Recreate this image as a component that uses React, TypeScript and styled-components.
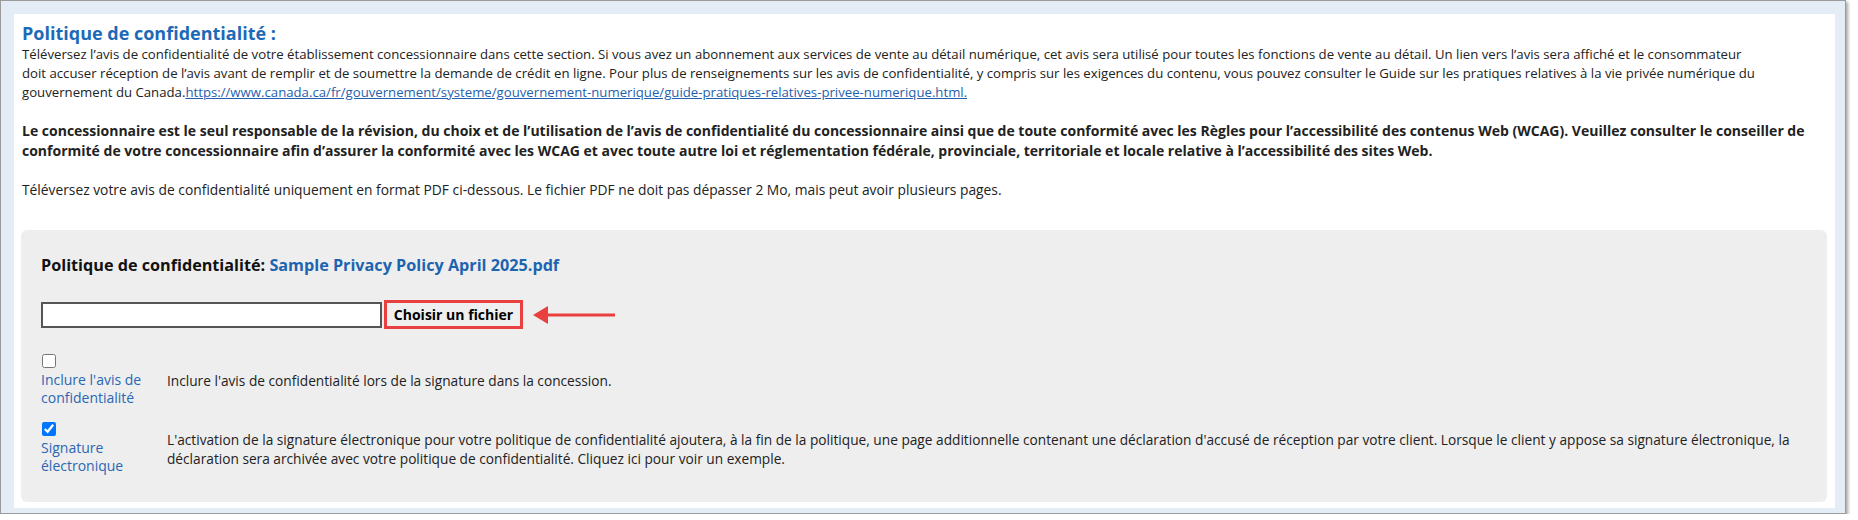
import React from "react";
import styled, { createGlobalStyle } from "styled-components";

const Global = createGlobalStyle`
  html, body { margin: 0; padding: 0; background: #ffffff; }
  body { font-family: "Open Sans", "Noto Sans", Arial, sans-serif; }
  * { box-sizing: border-box; }
`;

const Frame = styled.div`
  width: 1846px;
  height: 514px;
  border: 1px solid #9b9b9b;
  background: #e4ecf5;
  padding: 13px 10px 5px 13px;
  box-shadow: 2px 2px 3px rgba(0, 0, 0, 0.35);
`;

const Sheet = styled.div`
  height: 100%;
  background: #ffffff;
  padding: 7px 8px 0 8px;
  display: flex;
  flex-direction: column;
`;

const Title = styled.h2`
  margin: 0;
  font-size: 18px;
  line-height: 24px;
  font-weight: 700;
  color: #1c6ab7;
`;

const Para = styled.p<{ $bold?: boolean; $gap?: number; $size?: number }>`
  margin: ${(p) => p.$gap ?? 0}px 0 0 0;
  font-size: ${(p) => p.$size ?? 14}px;
  line-height: ${(p) => (p.$bold ? 20 : 19)}px;
  font-weight: ${(p) => (p.$bold ? 700 : 400)};
  color: #222;
`;

const Link = styled.a`
  color: #1f5fae;
  text-decoration: underline;
`;

const Panel = styled.section`
  margin: 31px 0 0 -1px;
  height: 272px;
  background: #eeeeee;
  border-radius: 6px;
  padding: 25px 20px 0 20px;
  display: flex;
  flex-direction: column;
`;

const PanelHeading = styled.div`
  font-size: 16.2px;
  line-height: 20px;
  font-weight: 700;
  color: #111;
`;

const FileName = styled.span`
  color: #1d64b0;
`;

const UploadRow = styled.div`
  margin-top: 25px;
  display: flex;
  align-items: center;
  gap: 2px;
`;

const FileBox = styled.div`
  width: 341px;
  height: 26px;
  background: #ffffff;
  border: 2px solid #555555;
`;

const ChooseButton = styled.button`
  width: 139px;
  height: 29px;
  border: 3px solid #e8403f;
  background: #efefef;
  font-family: "Open Sans", "Noto Sans", Arial, sans-serif;
  font-size: 14px;
  font-weight: 700;
  color: #000;
  padding: 0;
  line-height: 21px;
`;

const Arrow = styled.svg`
  margin-left: 8px;
  display: block;
`;

const OptionRow = styled.div<{ $gap: number }>`
  margin-top: ${(p) => p.$gap}px;
  display: grid;
  grid-template-columns: 126px 1fr;
  align-items: center;
`;

const OptionLabel = styled.label`
  display: flex;
  flex-direction: column;
  align-items: flex-start;
  font-size: 14px;
  line-height: 18px;
  color: #2a67b3;
`;

const Check = styled.input`
  margin: 0 0 3px 1px;
  width: 14px;
  height: 14px;
`;

const OptionText = styled.div`
  font-size: 13.7px;
  line-height: 19px;
  color: #222;
`;

export default function App() {
  return (
    <>
      <Global />
      <Frame>
        <Sheet>
          <Title>Politique de confidentialité :</Title>
          <Para $size={13.2}>
            Téléversez l’avis de confidentialité de votre établissement concessionnaire dans cette section. Si vous avez un
            abonnement aux services de vente au détail numérique, cet avis sera utilisé pour toutes les fonctions de vente au
            détail. Un lien vers l’avis sera affiché et le consommateur
            <br />
            doit accuser réception de l’avis avant de remplir et de soumettre la demande de crédit en ligne. Pour plus de
            renseignements sur les avis de confidentialité, y compris sur les exigences du contenu, vous pouvez consulter le
            Guide sur les pratiques relatives à la vie privée numérique du gouvernement du Canada.
            <Link href="#">
              https://www.canada.ca/fr/gouvernement/systeme/gouvernement-numerique/guide-pratiques-relatives-privee-numerique.html.
            </Link>
          </Para>
          <Para $bold $gap={19}>
            Le concessionnaire est le seul responsable de la révision, du choix et de l’utilisation de l’avis de confidentialité
            du concessionnaire ainsi que de toute conformité avec les Règles pour l’accessibilité des contenus Web (WCAG).
            Veuillez consulter le conseiller de conformité de votre concessionnaire afin d’assurer la conformité avec les WCAG et
            avec toute autre loi et réglementation fédérale, provinciale, territoriale et locale relative à l’accessibilité des
            sites Web.
          </Para>
          <Para $gap={19} $size={13.8}>
            Téléversez votre avis de confidentialité uniquement en format PDF ci-dessous. Le fichier PDF ne doit pas dépasser 2
            Mo, mais peut avoir plusieurs pages.
          </Para>
          <Panel>
            <PanelHeading>
              Politique de confidentialité: <FileName>Sample Privacy Policy April 2025.pdf</FileName>
            </PanelHeading>
            <UploadRow>
              <FileBox />
              <ChooseButton type="button">Choisir un fichier</ChooseButton>
              <Arrow width="82" height="20" viewBox="0 0 82 20">
                <path d="M14 8.5 H82 V11.5 H14 Z" fill="#e8403f" />
                <path d="M0 10 L15 1 L15 19 Z" fill="#e8403f" />
              </Arrow>
            </UploadRow>
            <OptionRow $gap={25}>
              <OptionLabel>
                <Check type="checkbox" />
                Inclure l'avis de confidentialité
              </OptionLabel>
              <OptionText>Inclure l'avis de confidentialité lors de la signature dans la concession.</OptionText>
            </OptionRow>
            <OptionRow $gap={15}>
              <OptionLabel>
                <Check type="checkbox" defaultChecked />
                Signature électronique
              </OptionLabel>
              <OptionText>
                L'activation de la signature électronique pour votre politique de confidentialité ajoutera, à la fin de la
                politique, une page additionnelle contenant une déclaration d'accusé de réception par votre client. Lorsque le
                client y appose sa signature électronique, la déclaration sera archivée avec votre politique de confidentialité.
                Cliquez ici pour voir un exemple.
              </OptionText>
            </OptionRow>
          </Panel>
        </Sheet>
      </Frame>
    </>
  );
}
